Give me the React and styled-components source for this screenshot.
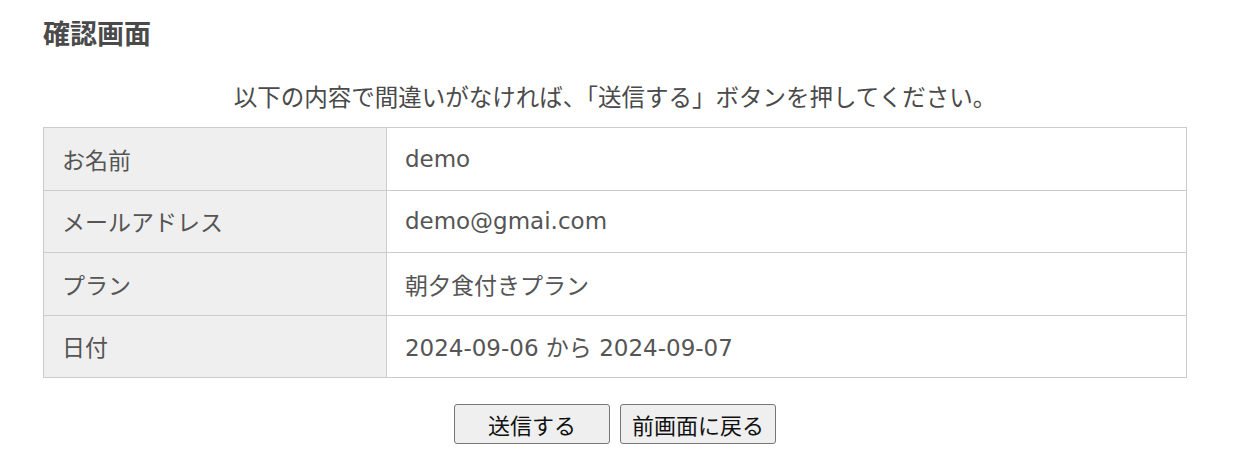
import React from "react";
import styled, { createGlobalStyle } from "styled-components";

const Global = createGlobalStyle`
  html, body { margin: 0; padding: 0; background: #fff; }
  body {
    font-family: "DejaVu Sans", "Noto Sans CJK JP", sans-serif;
    color: #555;
  }
`;

const Page = styled.main`
  width: 1144px;
  margin: 0 0 0 43px;
  padding-top: 16px;
`;

const Title = styled.h1`
  margin: 0;
  font-family: "Noto Sans CJK JP", sans-serif;
  font-size: 27px;
  line-height: 34px;
  font-weight: 700;
  color: #4a4a4a;
`;

const Lead = styled.p`
  margin: 32px 0 0;
  text-align: center;
  font-family: "Noto Sans CJK JP", sans-serif;
  font-size: 23.5px;
  line-height: 28px;
  color: #4a4a4a;
`;

const Table = styled.table`
  margin-top: 17px;
  width: 100%;
  border-collapse: collapse;
  border: 1px solid #ccc;
`;

const Row = styled.tr`
  height: 62.5px;
`;

const Cell = styled.td`
  border: 1px solid #ccc;
  padding: 0 18px;
  font-size: 23px;
  color: #555;
  text-align: left;
  vertical-align: middle;
  background: ${(p) => (p.$head ? "#efefef" : "#fff")};
  width: ${(p) => (p.$head ? "30%" : "auto")};
`;

const Actions = styled.div`
  display: flex;
  justify-content: center;
  gap: 10px;
  margin-top: 26px;
`;

const Button = styled.button`
  box-sizing: border-box;
  width: 156px;
  height: 40px;
  font-family: "Noto Sans CJK JP", sans-serif;
  font-size: 22px;
  line-height: 1;
  color: #111;
  background: #efefef;
  border: 1px solid #767676;
  border-radius: 3px;
  padding: 0;
  cursor: pointer;
`;

const rows = [
  ["お名前", "demo"],
  ["メールアドレス", "demo@gmai.com"],
  ["プラン", "朝夕食付きプラン"],
  ["日付", "2024-09-06 から 2024-09-07"],
];

export default function App() {
  return (
    <>
      <Global />
      <Page>
        <Title>確認画面</Title>
        <Lead>以下の内容で間違いがなければ、「送信する」ボタンを押してください。</Lead>
        <Table>
          <tbody>
            {rows.map(([k, v]) => (
              <Row key={k}>
                <Cell $head>{k}</Cell>
                <Cell>{v}</Cell>
              </Row>
            ))}
          </tbody>
        </Table>
        <Actions>
          <Button type="button">送信する</Button>
          <Button type="button">前画面に戻る</Button>
        </Actions>
      </Page>
    </>
  );
}
